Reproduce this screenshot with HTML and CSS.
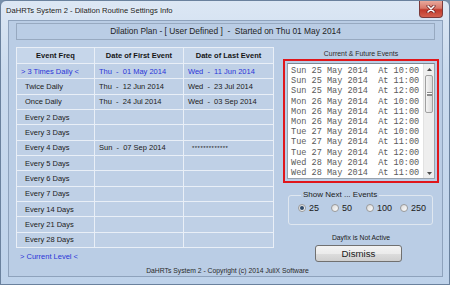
FILE: index.html
```html
<!DOCTYPE html>
<html lang="en">
<head>
    <title>DaHRTs System 2 - Dilation Routine Settings Info</title>
    <link rel="stylesheet" href="styles.css">
</head>
<body>
<div class="window">
    <div class="title-bar">
        <span class="title">DaHRTs System 2 - Dilation Routine Settings Info</span>
        <div class="close-btn">
            <svg width="10" height="8" viewBox="0 0 10 8">
                <path d="M2 1 L8 7 M8 1 L2 7" stroke="#6a2020" stroke-width="3" stroke-linecap="round"/>
                <path d="M2 1 L8 7 M8 1 L2 7" stroke="#ffffff" stroke-width="1.6" stroke-linecap="round"/>
            </svg>
        </div>
    </div>
    <div class="client">
        <div class="plan-header">Dilation Plan - [ User Defined ]&nbsp; - &nbsp;Started on Thu 01 May 2014</div>
        <div class="main">
            <div class="left-col">
                <div class="freq-table">
                    <div class="cell head">Event Freq</div>
                    <div class="cell head">Date of First Event</div>
                    <div class="cell head">Date of Last Event</div>

                    <div class="cell freq current">&gt; 3 Times Daily &lt;</div>
                    <div class="cell date current">Thu &nbsp;- &nbsp;01 May 2014</div>
                    <div class="cell date current">Wed &nbsp;- &nbsp;11 Jun 2014</div>

                    <div class="cell freq">Twice Daily</div>
                    <div class="cell date">Thu &nbsp;- &nbsp;12 Jun 2014</div>
                    <div class="cell date">Wed &nbsp;- &nbsp;23 Jul 2014</div>

                    <div class="cell freq">Once Daily</div>
                    <div class="cell date">Thu &nbsp;- &nbsp;24 Jul 2014</div>
                    <div class="cell date">Wed &nbsp;- &nbsp;03 Sep 2014</div>

                    <div class="cell freq">Every 2 Days</div>
                    <div class="cell date"></div>
                    <div class="cell date"></div>

                    <div class="cell freq">Every 3 Days</div>
                    <div class="cell date"></div>
                    <div class="cell date"></div>

                    <div class="cell freq">Every 4 Days</div>
                    <div class="cell date">Sun &nbsp;- &nbsp;07 Sep 2014</div>
                    <div class="cell date stars">* * * * * * * * * * * * *</div>

                    <div class="cell freq">Every 5 Days</div>
                    <div class="cell date"></div>
                    <div class="cell date"></div>

                    <div class="cell freq">Every 6 Days</div>
                    <div class="cell date"></div>
                    <div class="cell date"></div>

                    <div class="cell freq">Every 7 Days</div>
                    <div class="cell date"></div>
                    <div class="cell date"></div>

                    <div class="cell freq">Every 14 Days</div>
                    <div class="cell date"></div>
                    <div class="cell date"></div>

                    <div class="cell freq">Every 21 Days</div>
                    <div class="cell date"></div>
                    <div class="cell date"></div>

                    <div class="cell freq">Every 28 Days</div>
                    <div class="cell date"></div>
                    <div class="cell date"></div>
                </div>
                <p class="current-level">&gt; Current Level &lt;</p>
            </div>
            <div class="right-col">
                <p class="events-label">Current &amp; Future Events</p>
                <div class="events-frame">
                    <div class="events-list">
                        <div class="events-lines">Sun 25 May 2014  At 10:00
Sun 25 May 2014  At 11:00
Sun 25 May 2014  At 12:00
Mon 26 May 2014  At 10:00
Mon 26 May 2014  At 11:00
Mon 26 May 2014  At 12:00
Tue 27 May 2014  At 10:00
Tue 27 May 2014  At 11:00
Tue 27 May 2014  At 12:00
Wed 28 May 2014  At 10:00
Wed 28 May 2014  At 11:00</div>
                        <div class="scrollbar">
                            <div class="scroll-btn">
                                <svg width="5" height="3" viewBox="0 0 5 3"><polygon points="0,3 2.5,0 5,3" fill="#4d4d4d"/></svg>
                            </div>
                            <div class="scroll-track">
                                <div class="scroll-thumb">
                                    <span class="grip"></span>
                                </div>
                            </div>
                            <div class="scroll-btn">
                                <svg width="5" height="3" viewBox="0 0 5 3"><polygon points="0,0 5,0 2.5,3" fill="#4d4d4d"/></svg>
                            </div>
                        </div>
                    </div>
                </div>
                <fieldset class="show-next">
                    <legend>Show Next ... Events</legend>
                    <label class="radio"><span class="radio-dot checked"></span>25</label>
                    <label class="radio"><span class="radio-dot"></span>50</label>
                    <label class="radio"><span class="radio-dot"></span>100</label>
                    <label class="radio"><span class="radio-dot"></span>250</label>
                </fieldset>
                <p class="dayfix">Dayfix is Not Active</p>
                <button class="dismiss">Dismiss</button>
            </div>
        </div>
        <p class="copyright">DaHRTs System 2 - Copyright (c) 2014 JuliX Software</p>
    </div>
</div>
</body>
</html>
```

FILE: styles.css
```css
* {
    box-sizing: border-box;
}
body {
    margin: 0;
    font-family: 'Liberation Sans', Arial, sans-serif;
    font-size: 7.5px;
    color: #202020;
    background: #7890ab;
}
p {
    margin: 0;
}
.window {
    display: flex;
    flex-direction: column;
    width: 450px;
    height: 285px;
    padding: 0 6px 7px 7px;
    border: 1px solid #6a819d;
    border-radius: 6px 6px 0 0;
    background: linear-gradient(to bottom, #dce7f4 0%, #cbdbee 25%, #bed2ea 100%);
}
.title-bar {
    display: flex;
    align-items: flex-start;
    justify-content: space-between;
    height: 19px;
}
.title {
    margin: 5px 0 0 -2px;
    font-size: 7.6px;
    color: #1a1a1a;
    text-shadow: 0 0 4px #ffffff;
}
.close-btn {
    display: flex;
    align-items: center;
    justify-content: center;
    width: 24px;
    height: 17px;
    border: 1px solid #7b3a3a;
    border-top: none;
    border-radius: 0 0 4px 4px;
    background: linear-gradient(to bottom, #e9a99c 0%, #d8786a 45%, #c0392b 55%, #d4604e 100%);
}
.client {
    display: flex;
    flex-direction: column;
    flex: 1;
    padding: 2px 3px 0 7px;
    border: 1px solid #8ea2bc;
    background: #bacde5;
}
.plan-header {
    height: 17px;
    margin-right: 4px;
    border: 1px solid #97a9c0;
    font-size: 8.4px;
    line-height: 15px;
    text-align: center;
    color: #1e1e1e;
}
.main {
    display: flex;
    gap: 9px;
    margin-top: 7px;
}
.left-col {
    width: 258px;
}
.freq-table {
    display: grid;
    grid-template-columns: 77px 88px 89px;
    grid-template-rows: 15px repeat(12, 14.33px);
    gap: 1px;
    padding: 1px;
    background: #e9eff7;
}
.cell {
    display: flex;
    align-items: center;
    background: #bfd0e6;
    white-space: nowrap;
    font-size: 7.5px;
}
.cell.head {
    justify-content: center;
    font-weight: bold;
    background: #c6d6ea;
    color: #151515;
}
.cell.freq {
    padding-left: 8px;
}
.cell.freq.current {
    padding-left: 4px;
}
.cell.date {
    padding-left: 4px;
}
.cell.current {
    color: #2b35d8;
}
.cell.stars {
    padding-left: 8px;
    font-size: 6px;
    letter-spacing: -0.6px;
}
.current-level {
    margin: 4px 0 0 4px;
    color: #2b35d8;
    font-size: 7.5px;
}
.right-col {
    display: flex;
    flex-direction: column;
    width: 156px;
}
.events-label {
    margin-top: 3px;
    height: 9px;
    font-size: 6.9px;
    text-align: center;
    color: #2a2a2a;
}
.events-frame {
    height: 124px;
    padding: 2px;
    border: 2px solid #e0161b;
}
.events-list {
    display: flex;
    height: 116px;
    border: 1px solid #9aa3ad;
    border-top-color: #7f8790;
    background: #ffffff;
}
.events-lines {
    flex: 1;
    padding: 2px 0 0 3px;
    font-family: 'Liberation Mono', 'Courier New', monospace;
    font-size: 8.55px;
    line-height: 10.2px;
    white-space: pre;
    color: #5a5a5a;
}
.scrollbar {
    display: flex;
    flex-direction: column;
    width: 11px;
    background: #eeeeee;
    border-left: 1px solid #e2e2e2;
}
.scroll-btn {
    display: flex;
    align-items: center;
    justify-content: center;
    height: 10px;
}
.scroll-track {
    flex: 1;
    padding: 1px 1px 0 1px;
}
.scroll-thumb {
    display: flex;
    align-items: center;
    justify-content: center;
    height: 38px;
    border: 1px solid #a0a0a0;
    border-radius: 2px;
    background: linear-gradient(to right, #f4f4f4, #dadada);
}
.grip {
    width: 5px;
    height: 4px;
    border-top: 1px solid #8a8a8a;
    border-bottom: 1px solid #8a8a8a;
    background: linear-gradient(#ffffff 0 1px, #8a8a8a 1px 2px, #ffffff 2px);
}
.show-next {
    display: flex;
    height: 35px;
    margin: 7px 6px 0 5px;
    padding: 2px 0 0 9px;
    border: 1px solid #dfe7f0;
    border-radius: 3px;
}
.show-next legend {
    margin-left: 3px;
    padding: 0 2px;
    font-size: 8px;
    line-height: 10px;
    color: #202020;
}
.radio {
    display: flex;
    align-items: center;
    gap: 3px;
    height: 12px;
    font-size: 9px;
    color: #202020;
}
.radio:nth-of-type(1) {
    width: 33px;
}
.radio:nth-of-type(2) {
    width: 35px;
}
.radio:nth-of-type(3) {
    width: 34px;
}
.radio-dot {
    display: flex;
    align-items: center;
    justify-content: center;
    width: 8px;
    height: 8px;
    border: 1px solid #9a9a9a;
    border-radius: 50%;
    background: linear-gradient(135deg, #d8d8d8, #ffffff);
}
.radio-dot.checked::after {
    content: "";
    width: 4px;
    height: 4px;
    border-radius: 50%;
    background: #2d4a6b;
}
.dayfix {
    margin-top: 9px;
    font-size: 6.8px;
    text-align: center;
}
.dismiss {
    width: 87px;
    height: 17px;
    margin: 4px 0 0 32px;
    padding: 0;
    border: 1px solid #707070;
    border-radius: 3px;
    background: linear-gradient(to bottom, #f3f3f3 0%, #ebebeb 50%, #dddddd 51%, #cfcfcf 100%);
    font-family: 'Liberation Sans', Arial, sans-serif;
    font-size: 9.7px;
    color: #1a1a1a;
}
.copyright {
    margin-top: auto;
    margin-bottom: 2px;
    font-size: 6.8px;
    text-align: center;
    color: #2a2a2a;
}
```
